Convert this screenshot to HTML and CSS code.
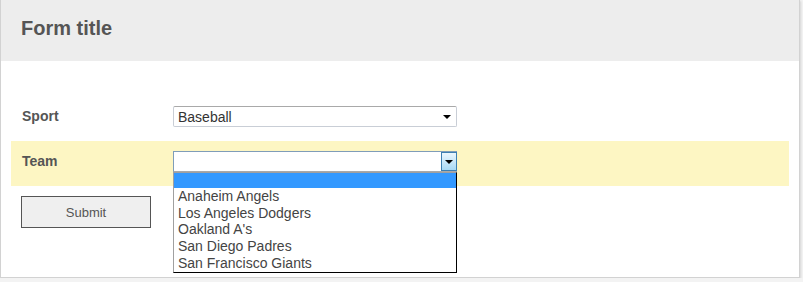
FILE: index.html
```html
<!DOCTYPE html>
<html lang="en">
<head>
  <meta charset="UTF-8" />
  <title>Form title</title>
  <link rel="stylesheet" href="styles.css">
</head>
<body>

  <div class="card">
    <div class="card-header">
      <h2>Form title</h2>
    </div>

    <form class="form">
      <div class="row">
        <label class="label">Sport</label>
        <div class="select">
          <span class="select-text">Baseball</span>
          <span class="arrow"></span>
        </div>
      </div>

      <div class="row row-active">
        <label class="label">Team</label>
        <div class="select select-open">
          <span class="select-text"></span>
          <span class="drop-btn"><span class="arrow"></span></span>

          <!-- open dropdown list -->
          <ul class="options">
            <li class="option selected"></li>
            <li class="option">Anaheim Angels</li>
            <li class="option">Los Angeles Dodgers</li>
            <li class="option">Oakland A's</li>
            <li class="option">San Diego Padres</li>
            <li class="option">San Francisco Giants</li>
          </ul>
        </div>
      </div>

      <button type="button" class="submit">Submit</button>
    </form>
  </div>

</body>
</html>
```

FILE: styles.css
```css
body {
  margin: 0;
  background: #f3f3f3;
  font-family: Arial, "Liberation Sans", sans-serif;
}

.card {
  width: 800px;
  height: 278px;
  box-sizing: border-box;
  background: #fff;
  border: 1px solid #d2d2d2;
  border-top: none;
  box-shadow: 1px 1px 2px rgba(0,0,0,0.12);
}

.card-header {
  height: 61px;
  box-sizing: border-box;
  background: #ededed;
  padding: 18px 0 0 20px;
}

.card-header h2 {
  margin: 0;
  font-size: 20px;
  line-height: 20px;
  color: #555;
}

.form {
  padding: 35px 10px 0;
}

.row {
  display: grid;
  grid-template-columns: 151px 284px;
  padding: 10px 11px 14px;
}

.row-active {
  background: #fdf6c3;
}

.label {
  font-size: 14px;
  line-height: 21px;
  font-weight: bold;
  color: #555;
}

.select {
  position: relative;
  height: 21px;
  box-sizing: border-box;
  background: #fff;
  border: 1px solid #c9ced6;
  border-top-color: #a9a9a9;
  border-radius: 2px;
  display: flex;
  align-items: center;
}

.select-text {
  flex: 1;
  padding: 1px 0 0 4px;
  font-size: 14px;
  line-height: 18px;
  color: #333;
}

.arrow {
  width: 0;
  height: 0;
  border-left: 4px solid transparent;
  border-right: 4px solid transparent;
  border-top: 4px solid #000;
  margin-right: 5px;
}

.select-open {
  border-color: #7f9db9;
  border-bottom-color: #a9a9a9;
  border-radius: 0;
}

.drop-btn {
  width: 16px;
  height: 19px;
  box-sizing: border-box;
  border: 1px solid #3c7fb1;
  background: linear-gradient(#eaf6fd, #a7d9f5);
  display: flex;
  align-items: center;
  justify-content: center;
  margin-right: -1px;
}

.drop-btn .arrow {
  margin: 0;
  border-width: 4px 4px 0;
}

.options {
  position: absolute;
  top: 20px;
  left: -1px;
  width: 284px;
  box-sizing: border-box;
  margin: 0;
  padding: 0 0 1px;
  list-style: none;
  background: #fff;
  border: 1px solid #000;
  border-left-color: #a0a0a0;
  border-top-color: #a0a0a0;
  z-index: 2;
}

.option {
  height: 16.67px;
  padding-left: 4px;
  font-size: 14px;
  line-height: 16.67px;
  color: #444;
}

.option.selected {
  height: 15px;
  background: #3399ff;
}

.submit {
  display: block;
  margin: 10px 0 0 10px;
  width: 130px;
  height: 32px;
  background: #efefef;
  border: 1px solid #555;
  font-family: Arial, "Liberation Sans", sans-serif;
  font-size: 13px;
  color: #555;
}
```
